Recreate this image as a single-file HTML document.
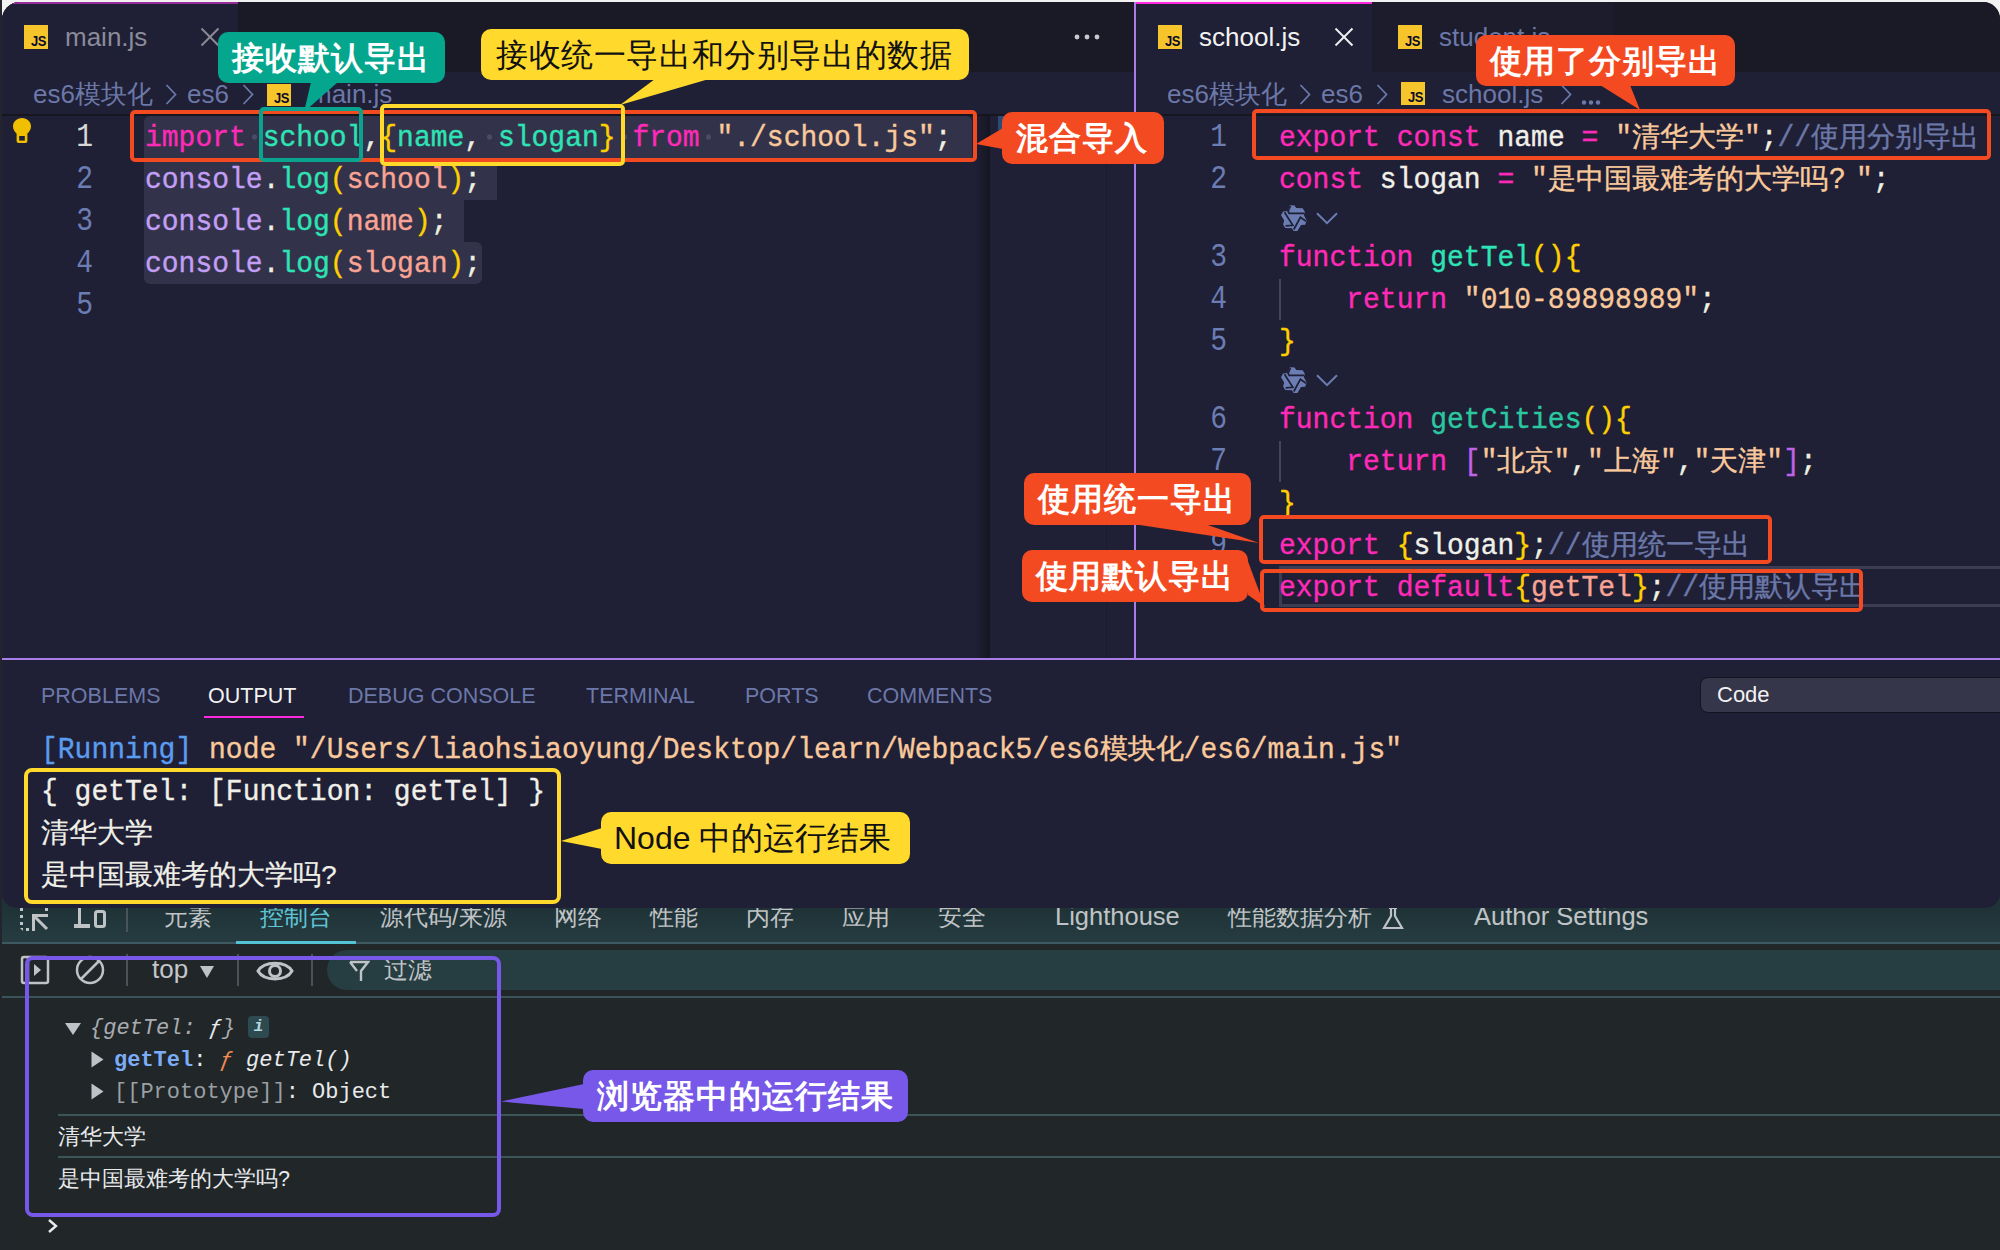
<!DOCTYPE html>
<html><head><meta charset="utf-8">
<style>
*{margin:0;padding:0;box-sizing:border-box}
html,body{width:2000px;height:1250px;overflow:hidden;background:#f2f2f2;font-family:"Liberation Sans",sans-serif}
.a{position:absolute}
.mono{font-family:"Liberation Mono",monospace}
#strip{left:0;top:0;width:2px;height:1250px;background:#23242c}
/* devtools */
#dt{left:0;top:0;width:2000px;height:1250px;clip-path:inset(860px 0 0 2px)}
/* vscode window */
#win{left:0;top:0;width:2000px;height:908px;clip-path:inset(2px 0 0 2px round 18px 17px 15px 15px);background:#1f1f35}
.tabbar{background:#1a1a26}
.tab{background:#1f1f35}
.js{position:absolute;width:24px;height:24px;background:#f6c52c}
.js:after{content:"JS";position:absolute;right:2px;bottom:1px;font:bold 13px/1 "Liberation Sans",sans-serif;color:#0d0d2a;letter-spacing:-0.5px;transform:scaleY(1.1);transform-origin:bottom}
.x{position:absolute;width:18px;height:18px}
.x:before,.x:after{content:"";position:absolute;left:-3px;top:8px;width:24px;height:2px;background:currentColor;transform:rotate(45deg)}
.x:after{transform:rotate(-45deg)}
.cj{display:inline-block;transform:scaleY(0.94);transform-origin:50% 29px}
.cl{height:42px;transform:scaleY(1.06);transform-origin:0 28px}
.ln .cl{transform:scaleY(1.18)}
.code{font-family:"Liberation Mono",monospace;font-size:28px;line-height:42px;white-space:pre;-webkit-text-stroke:0.35px currentColor}
.ln{font-family:"Liberation Mono",monospace;font-size:28px;line-height:42px;color:#6b7db3;text-align:right;width:60px;white-space:pre}
.kw{color:#ff2ab8}.fn{color:#2ee3b5}.st{color:#f9c99b}.ar{color:#f9a394}.ob{color:#c39ef5}.pu{color:#f0f0e0}.pa{color:#ffd000}.cm{color:#6b78a8}.br{color:#c062e6}.ws{color:#4d4e68}.sp{position:relative}.sp:after{content:"";position:absolute;left:6px;top:12px;width:5px;height:5px;border-radius:50%;background:#4a4c66}.wh{color:#f0f0e8}
.bc{font-size:26px;color:#6b78a8;white-space:pre;line-height:30px}
.ptab{font-size:21.5px;color:#6b78a8;line-height:26px;white-space:pre;margin-top:1px}
.call{position:absolute;border-radius:10px;color:#fff;font-weight:900;font-size:32px;line-height:52px;white-space:pre;text-align:left;padding-left:14px;letter-spacing:1px}
.box{position:absolute;border:4px solid;border-radius:5px}
.dtt{font-size:23.5px;color:#c0c3c6;font-weight:500;line-height:26px;white-space:pre}
</style></head><body>
<div class="a" id="strip"></div>

<!-- ============ DEVTOOLS ============ -->
<div class="a" id="dt">
 <div class="a" style="left:0;top:860px;width:2000px;height:82px;background:linear-gradient(180deg,#1f3337 0,#1f3337 48px,#263c41 82px)"></div>
 <div class="a" style="left:0;top:942px;width:2000px;height:2px;background:#3d5a62"></div>
 <div class="a" style="left:0;top:944px;width:2000px;height:306px;background:#212628"></div>
 <div class="a" style="left:327px;top:950px;width:1700px;height:40px;background:#263d42;border-radius:20px"></div>
 <div class="a" style="left:0;top:996px;width:2000px;height:2px;background:#3a545a"></div>
 <div class="a" style="left:236px;top:941px;width:120px;height:3px;background:#55c2d4"></div>
 <!-- tab row icons -->
 <svg class="a" style="left:20px;top:907px" width="32" height="26" viewBox="0 0 32 26"><g fill="#c0c3c6"><rect x="0" y="1" width="3" height="3"/><rect x="0" y="8" width="3" height="3"/><rect x="0" y="15" width="3" height="3"/><path d="M0 21h3v3z"/><rect x="6" y="21" width="3" height="3"/><rect x="25" y="1" width="3" height="3"/></g><path d="M13.5 24V8.5H28M14.5 9.5L27 22" fill="none" stroke="#c0c3c6" stroke-width="3"/></svg>
 <svg class="a" style="left:73px;top:907px" width="36" height="24" viewBox="0 0 36 24"><g fill="#c0c3c6"><rect x="5" y="1" width="3" height="17"/><rect x="1" y="17" width="16" height="4"/></g><rect x="22.5" y="4.5" width="9" height="15" rx="2" fill="none" stroke="#c0c3c6" stroke-width="3"/></svg>
 <div class="a" style="left:126px;top:908px;width:2px;height:24px;background:#4a5358"></div>
 <div class="a dtt" style="left:164px;top:904px">元素</div>
 <div class="a dtt" style="left:260px;top:904px;color:#5ec4d6">控制台</div>
 <div class="a dtt" style="left:380px;top:904px">源代码/来源</div>
 <div class="a dtt" style="left:554px;top:904px">网络</div>
 <div class="a dtt" style="left:650px;top:904px">性能</div>
 <div class="a dtt" style="left:746px;top:904px">内存</div>
 <div class="a dtt" style="left:842px;top:904px">应用</div>
 <div class="a dtt" style="left:938px;top:904px">安全</div>
 <div class="a dtt" style="left:1055px;top:903px;font-size:25.5px">Lighthouse</div>
 <div class="a dtt" style="left:1228px;top:904px">性能数据分析</div>
 <svg class="a" style="left:1381px;top:906px" width="24" height="24" viewBox="0 0 24 24"><path d="M8 2h8M10 2v8L3 22h18L14 10V2" fill="none" stroke="#bfc3c8" stroke-width="2.2"/></svg>
 <div class="a dtt" style="left:1474px;top:903px;font-size:25.5px">Author Settings</div>
 <!-- toolbar -->
 <svg class="a" style="left:20px;top:955px" width="30" height="30" viewBox="0 0 30 30"><rect x="2" y="2" width="26" height="26" rx="2" fill="none" stroke="#bfc3c8" stroke-width="2.5"/><path d="M8 2v26" stroke="#bfc3c8" stroke-width="2.5"/><path d="M14 9l7 6-7 6z" fill="#bfc3c8"/></svg>
 <svg class="a" style="left:74px;top:955px" width="32" height="32" viewBox="0 0 32 32"><circle cx="16" cy="15" r="13" fill="none" stroke="#bfc3c8" stroke-width="2.5"/><path d="M7 24L25 6" stroke="#bfc3c8" stroke-width="2.5"/></svg>
 <div class="a" style="left:126px;top:954px;width:2px;height:32px;background:#4a5358"></div>
 <div class="a dtt" style="left:152px;top:956px;font-size:26px;color:#c4c7ca">top</div>
 <svg class="a" style="left:199px;top:965px" width="16" height="14" viewBox="0 0 16 14"><path d="M1 1h14L8 13z" fill="#bfc3c8"/></svg>
 <div class="a" style="left:237px;top:954px;width:2px;height:32px;background:#4a5358"></div>
 <svg class="a" style="left:256px;top:958px" width="38" height="26" viewBox="0 0 38 26"><path d="M2 13C8 2.5 30 2.5 36 13C30 23.5 8 23.5 2 13z" fill="none" stroke="#bfc3c8" stroke-width="3"/><circle cx="19" cy="13" r="5.5" fill="none" stroke="#bfc3c8" stroke-width="3"/></svg>
 <div class="a" style="left:311px;top:954px;width:2px;height:32px;background:#4a5358"></div>
 <svg class="a" style="left:348px;top:960px" width="22" height="22" viewBox="0 0 22 22"><path d="M2 2h18l-7 9v10M9 11L2 2" fill="none" stroke="#bfc3c8" stroke-width="2.4"/></svg>
 <div class="a dtt" style="left:384px;top:957px;font-size:24px">过滤</div>
 <!-- messages -->
 <svg class="a" style="left:64px;top:1022px" width="18" height="14" viewBox="0 0 18 14"><path d="M1 1h16L9 13z" fill="#bfc3c8"/></svg>
 <div class="a mono" style="left:90px;top:1014px;font-size:22px;line-height:30px;font-style:italic;color:#a8acb0;white-space:pre">{getTel: <span style="color:#e8eaec">ƒ</span>}</div>
 <div class="a" style="left:248px;top:1016px;width:21px;height:22px;background:#2c4a50;border-radius:4px;color:#b9d9e0;font:italic bold 16px 'Liberation Mono',monospace;text-align:center;line-height:22px">i</div>
 <svg class="a" style="left:91px;top:1051px" width="13" height="17" viewBox="0 0 13 17"><path d="M0.5 0.5v16l12-8z" fill="#bfc3c8"/></svg>
 <div class="a mono" style="left:114px;top:1046px;font-size:22px;line-height:30px;white-space:pre"><b style="color:#7cacf8">getTel</b><span style="color:#e8eaec">: </span><i style="color:#f28b54">ƒ</i> <i style="color:#e8eaec">getTel()</i></div>
 <svg class="a" style="left:91px;top:1083px" width="13" height="17" viewBox="0 0 13 17"><path d="M0.5 0.5v16l12-8z" fill="#bfc3c8"/></svg>
 <div class="a mono" style="left:114px;top:1078px;font-size:22px;line-height:30px;white-space:pre"><span style="color:#9a9fa4">[[Prototype]]</span><span style="color:#e8eaec">: Object</span></div>
 <div class="a" style="left:58px;top:1114px;width:1942px;height:2px;background:#3b5559"></div>
 <div class="a" style="left:58px;top:1122px;font-size:21.5px;line-height:30px;color:#e8eaec">清华大学</div>
 <div class="a" style="left:58px;top:1156px;width:1942px;height:2px;background:#3b5559"></div>
 <div class="a" style="left:58px;top:1164px;font-size:21.5px;line-height:30px;color:#e8eaec">是中国最难考的大学吗?</div>
 <svg class="a" style="left:47px;top:1218px" width="12" height="16" viewBox="0 0 12 16"><path d="M2 2l7 6-7 6" fill="none" stroke="#e8eaec" stroke-width="2.4"/></svg>
</div>

<!-- ============ VSCODE WINDOW ============ -->
<div class="a" id="win">
 <!-- left tab bar -->
 <div class="a tabbar" style="left:0;top:0;width:1134px;height:72px"></div>
 <div class="a tab" style="left:0;top:0;width:238px;height:72px;border-top:4px solid #962d9a"></div>
 <div class="js" style="left:24px;top:25px"></div>
 <div class="a" style="left:65px;top:22px;font-size:26px;line-height:30px;color:#8b8b9a">main.js</div>
 <div class="x" style="left:201px;top:28px;color:#8b8b95"></div>
 <svg class="a" style="left:1073px;top:33px" width="30" height="8"><circle cx="4" cy="4" r="2.4" fill="#c8c8d0"/><circle cx="14" cy="4" r="2.4" fill="#c8c8d0"/><circle cx="24" cy="4" r="2.4" fill="#c8c8d0"/></svg>
 <!-- divider -->
 <div class="a" style="left:1134px;top:0;width:2px;height:660px;background:#a77ee8"></div>
 <!-- right tab bar -->
 <div class="a tabbar" style="left:1136px;top:0;width:864px;height:72px"></div>
 <div class="a tab" style="left:1136px;top:0;width:236px;height:72px;border-top:4px solid #ff2ae0"></div>
 <div class="js" style="left:1158px;top:25px"></div>
 <div class="a" style="left:1199px;top:22px;font-size:26px;line-height:30px;color:#f2f2f2">school.js</div>
 <div class="x" style="left:1335px;top:28px;color:#f0f0f0"></div>
 <div class="a" style="left:1372px;top:2px;width:242px;height:70px;background:#1c1c2c"></div>
 <div class="js" style="left:1398px;top:25px"></div>
 <div class="a" style="left:1439px;top:22px;font-size:26px;line-height:30px;color:#6b78a8">student.js</div>
 <!-- breadcrumbs -->
 <div class="a" style="left:0;top:114px;width:1134px;height:2px;background:#16161f"></div>
 <div class="a" style="left:1136px;top:114px;width:864px;height:2px;background:#16161f"></div>
  <div class="a bc" style="left:33px;top:79px">es6模块化</div>
 <svg class="a" style="left:165px;top:84px" width="12" height="21"><path d="M1.5 1L10.5 10.5L1.5 20" fill="none" stroke="#6b78a8" stroke-width="1.8"/></svg>
 <div class="a bc" style="left:187px;top:79px">es6</div>
 <svg class="a" style="left:242px;top:84px" width="12" height="21"><path d="M1.5 1L10.5 10.5L1.5 20" fill="none" stroke="#6b78a8" stroke-width="1.8"/></svg>
 <div class="js" style="left:267px;top:84px;width:24px;height:22px"></div>
 <div class="a bc" style="left:310px;top:79px">main.js</div>
 <div class="a bc" style="left:1167px;top:79px">es6模块化</div>
 <svg class="a" style="left:1299px;top:84px" width="12" height="21"><path d="M1.5 1L10.5 10.5L1.5 20" fill="none" stroke="#6b78a8" stroke-width="1.8"/></svg>
 <div class="a bc" style="left:1321px;top:79px">es6</div>
 <svg class="a" style="left:1376px;top:84px" width="12" height="21"><path d="M1.5 1L10.5 10.5L1.5 20" fill="none" stroke="#6b78a8" stroke-width="1.8"/></svg>
 <div class="js" style="left:1401px;top:82px;width:24px;height:23px"></div>
 <div class="a bc" style="left:1442px;top:79px">school.js</div>
 <svg class="a" style="left:1560px;top:84px" width="12" height="21"><path d="M1.5 1L10.5 10.5L1.5 20" fill="none" stroke="#6b78a8" stroke-width="1.8"/></svg>
 <svg class="a" style="left:1581px;top:99px" width="20" height="7"><circle cx="3" cy="3.5" r="2.2" fill="#6b78a8"/><circle cx="10" cy="3.5" r="2.2" fill="#6b78a8"/><circle cx="17" cy="3.5" r="2.2" fill="#6b78a8"/></svg>
 <!-- left editor -->
 <div class="a" style="left:976px;top:115px;width:14px;height:543px;background:linear-gradient(90deg,rgba(20,20,30,0),rgba(20,20,30,.85))"></div>
 <div class="a" style="left:1106px;top:115px;width:1px;height:543px;background:#1a1a2a"></div>
 <div class="a" style="left:998px;top:116px;width:6px;height:14px;background:#2a4a78"></div>
 <div class="a" style="left:144px;top:116px;width:828px;height:42px;background:#32334a;border-radius:6px 6px 0 0"></div>
 <div class="a" style="left:144px;top:158px;width:353px;height:42px;background:#32334a;border-radius:0 6px 0 0"></div>
 <div class="a" style="left:144px;top:200px;width:320px;height:42px;background:#32334a"></div>
 <div class="a" style="left:144px;top:242px;width:338px;height:42px;background:#32334a;border-radius:0 6px 6px 6px"></div>
 <div class="a ln" style="left:33px;top:118px"><div class="cl"><span style="color:#d8d8d8">1</span></div><div class="cl">2</div><div class="cl">3</div><div class="cl">4</div><div class="cl">5</div></div>
 <div class="a code" style="left:145px;top:118px"><div class="cl"><span class="kw">import</span><span class="sp"> </span><span class="fn">school</span><span class="pu">,</span><span class="pa">{</span><span class="fn">name</span><span class="pu">,</span><span class="sp"> </span><span class="fn">slogan</span><span class="pa">}</span><span class="sp"> </span><span class="kw">from</span><span class="sp"> </span><span class="st">"./school.js"</span><span class="pu">;</span></div><div class="cl"><span class="ob">console</span><span class="pu">.</span><span class="fn">log</span><span class="pa">(</span><span class="ar">school</span><span class="pa">)</span><span class="pu">;</span></div><div class="cl"><span class="ob">console</span><span class="pu">.</span><span class="fn">log</span><span class="pa">(</span><span class="ar">name</span><span class="pa">)</span><span class="pu">;</span></div><div class="cl"><span class="ob">console</span><span class="pu">.</span><span class="fn">log</span><span class="pa">(</span><span class="ar">slogan</span><span class="pa">)</span><span class="pu">;</span></div></div>
 <!-- lightbulb -->
 <svg class="a" style="left:12px;top:117px" width="20" height="28" viewBox="0 0 20 28"><path d="M10 1C4.9 1 1 4.6 1 9.4c0 3.2 1.9 5.2 3.6 7.2V24c0 1.1.9 2 2 2h6.8c1.1 0 2-.9 2-2v-7.4c1.7-2 3.6-4 3.6-7.2C19 4.6 15.1 1 10 1z" fill="#f0c000"/><rect x="7.2" y="19" width="5.6" height="4.6" fill="#1f1f35"/></svg>
 <!-- right editor -->
 <div class="a" style="left:1279px;top:566px;width:721px;height:41px;border:3px solid #3c3d55;border-right:none"></div>
 <div class="a ln" style="left:1167px;top:118px"><div class="cl">1</div><div class="cl">2</div></div>
 <div class="a ln" style="left:1167px;top:238px"><div class="cl">3</div><div class="cl">4</div><div class="cl">5</div></div>
 <div class="a ln" style="left:1167px;top:400px"><div class="cl">6</div><div class="cl">7</div><div class="cl">8</div><div class="cl">9</div></div>
 <div class="a" style="left:1279px;top:279px;width:2px;height:41px;background:#45455a"></div>
 <div class="a" style="left:1279px;top:441px;width:2px;height:41px;background:#45455a"></div>
 <div class="a code" style="left:1279px;top:118px"><div class="cl"><span class="kw">export</span> <span class="kw">const</span> <span class="wh">name</span> <span class="kw">=</span> <span class="st">"<span class="cj">清华大学</span>"</span><span class="pu">;</span><span class="cm">//<span class="cj">使用分别导出</span></span></div><div class="cl"><span class="kw">const</span> <span class="wh">slogan</span> <span class="kw">=</span> <span class="st">"<span class="cj">是中国最难考的大学吗</span><span style="display:inline-block;width:28px;padding-left:1px">?</span>"</span><span class="pu">;</span></div></div>
 <div class="a code" style="left:1279px;top:238px"><div class="cl"><span class="kw">function</span> <span class="fn">getTel</span><span class="pa">(){</span></div><div class="cl">    <span class="kw">return</span> <span class="st">"010-89898989"</span><span class="pu">;</span></div><div class="cl"><span class="pa">}</span></div></div>
 <div class="a code" style="left:1279px;top:400px"><div class="cl"><span class="kw">function</span> <span class="fn" style="color:#2bc8a0">getCities</span><span class="pa">(){</span></div><div class="cl">    <span class="kw">return</span> <span class="br">[</span><span class="st">"<span class="cj">北京</span>"</span><span class="pu">,</span><span class="st">"<span class="cj">上海</span>"</span><span class="pu">,</span><span class="st">"<span class="cj">天津</span>"</span><span class="br">]</span><span class="pu">;</span></div><div class="cl"><span class="pa">}</span></div><div class="cl"><span class="kw">export</span> <span class="pa">{</span><span class="wh">slogan</span><span class="pa">}</span><span class="pu">;</span><span class="cm">//<span class="cj">使用统一导出</span></span></div><div class="cl"><span class="kw">export</span> <span class="kw">default</span><span class="pa">{</span><span class="ar">getTel</span><span class="pa">}</span><span class="pu">;</span><span class="cm">//<span class="cj">使用默认导出</span></span></div></div>
 <!-- codelens icons -->
 <svg class="a" style="left:1281px;top:205px" width="58" height="28" viewBox="0 0 58 28"><path d="M9.1 0.3L13.7 0.5L15.1 3L21.7 3.3L23.8 6.8L22.8 10L25.6 15.6L24.2 19.8L20 20.1L16.4 26.1L12.6 26.1L10.9 23.3L4.2 22.9L2.1 19.4L3.2 15.6L0 10.3L2.1 6.5L6.3 6.1Z" fill="#6b7db3"/><g stroke="#1f1f35" stroke-width="1.7" fill="none"><path d="M9.5 1L7 6.3L8.2 8.3H23"/><path d="M3.5 7.3L11.8 20.3L4.6 20.8"/><path d="M25 16.2L19.4 12.3L12.8 24.5"/></g><path d="M36 8.2L46 18.2L56 8.2" stroke="#6b7db3" stroke-width="2" fill="none"/></svg>
 <svg class="a" style="left:1281px;top:367px" width="58" height="28" viewBox="0 0 58 28"><path d="M9.1 0.3L13.7 0.5L15.1 3L21.7 3.3L23.8 6.8L22.8 10L25.6 15.6L24.2 19.8L20 20.1L16.4 26.1L12.6 26.1L10.9 23.3L4.2 22.9L2.1 19.4L3.2 15.6L0 10.3L2.1 6.5L6.3 6.1Z" fill="#6b7db3"/><g stroke="#1f1f35" stroke-width="1.7" fill="none"><path d="M9.5 1L7 6.3L8.2 8.3H23"/><path d="M3.5 7.3L11.8 20.3L4.6 20.8"/><path d="M25 16.2L19.4 12.3L12.8 24.5"/></g><path d="M36 8.2L46 18.2L56 8.2" stroke="#6b7db3" stroke-width="2" fill="none"/></svg>
 <!-- panel -->
 <div class="a" style="left:0;top:658px;width:2000px;height:2px;background:#a77ee8"></div>
 <div class="a ptab" style="left:41px;top:682px">PROBLEMS</div>
 <div class="a ptab" style="left:208px;top:682px;color:#f2f2f2">OUTPUT</div>
 <div class="a ptab" style="left:348px;top:682px">DEBUG CONSOLE</div>
 <div class="a ptab" style="left:586px;top:682px">TERMINAL</div>
 <div class="a ptab" style="left:745px;top:682px">PORTS</div>
 <div class="a ptab" style="left:867px;top:682px">COMMENTS</div>
 <div class="a" style="left:204px;top:716px;width:100px;height:2px;background:#ff2ae0"></div>
 <div class="a" style="left:1700px;top:677px;width:320px;height:36px;background:#35364a;border:1px solid #14141f;border-radius:8px"></div>
 <div class="a" style="left:1717px;top:682px;font-size:22px;line-height:26px;color:#f2f2f2">Code</div>
 <div class="a code" style="left:41px;top:730px"><div class="cl"><span style="color:#5a9cf0">[Running]</span> <span class="st">node "/Users/liaohsiaoyung/Desktop/learn/Webpack5/es6<span class="cj">模块化</span>/es6/main.js"</span></div><div class="cl"><span class="wh">{ getTel: [Function: getTel] }</span></div><div class="cl" style="transform:none;font-size:28px;-webkit-text-stroke:0.2px"><span class="wh">清华大学</span></div><div class="cl" style="transform:none;font-size:28px;-webkit-text-stroke:0.2px"><span class="wh">是中国最难考的大学吗?</span></div></div>
</div>

<!-- ============ ANNOTATIONS ============ -->
<div id="ann">
 <div class="box" style="left:130px;top:110px;width:847px;height:52px;border-color:#f34a22"></div>
 <div class="box" style="left:259px;top:107px;width:104px;height:55px;border-color:#0aa48e"></div>
 <div class="box" style="left:380px;top:104px;width:245px;height:62px;border-color:#ffd92c"></div>
 <div class="box" style="left:1252px;top:109px;width:739px;height:51px;border-color:#f34a22"></div>
 <div class="box" style="left:1259px;top:515px;width:513px;height:49px;border-color:#f34a22"></div>
 <div class="box" style="left:1260px;top:569px;width:603px;height:43px;border-color:#f34a22"></div>
 <div class="box" style="left:24px;top:768px;width:537px;height:136px;border-color:#ffd92c;border-radius:8px"></div>
 <div class="box" style="left:25px;top:956px;width:476px;height:261px;border-color:#7758e8;border-radius:8px"></div>
 <svg class="a" style="left:0;top:0" width="2000" height="1250">
  <polygon points="311,82 338,82 304,112" fill="#05a68e"/>
  <polygon points="655,79 709,79 620,105" fill="#ffd92c"/>
  <polygon points="1003,128 1003,149 976,144" fill="#f34a22"/>
  <polygon points="1600,85 1630,85 1640,110" fill="#f34a22"/>
  <polygon points="1133,524 1205,524 1259,543" fill="#f34a22"/>
  <polygon points="1246,556 1248,595 1265,607" fill="#f34a22"/>
  <polygon points="602,828 602,849 561,841" fill="#ffd92c"/>
  <polygon points="584,1084 584,1109 501,1101.5" fill="#7758e8"/>
 </svg>
 <div class="call" style="left:218px;top:32px;width:227px;height:51px;background:#05a68e">接收默认导出</div>
 <div class="call" style="left:481px;top:29px;width:488px;height:51px;background:#ffd92c;color:#111;font-weight:500;padding-left:15px;letter-spacing:0.6px">接收统一导出和分别导出的数据</div>
 <div class="call" style="left:1002px;top:112px;width:162px;height:52px;background:#f34a22">混合导入</div>
 <div class="call" style="left:1476px;top:35px;width:259px;height:51px;background:#f34a22">使用了分别导出</div>
 <div class="call" style="left:1024px;top:473px;width:227px;height:52px;background:#f34a22">使用统一导出</div>
 <div class="call" style="left:1022px;top:550px;width:226px;height:52px;background:#f34a22">使用默认导出</div>
 <div class="call" style="left:601px;top:812px;width:309px;height:52px;background:#ffd92c;color:#111;font-weight:500;padding-left:13px;letter-spacing:0">Node 中的运行结果</div>
 <div class="call" style="left:583px;top:1070px;width:325px;height:52px;background:#7758e8">浏览器中的运行结果</div>
</div>
</body></html>
